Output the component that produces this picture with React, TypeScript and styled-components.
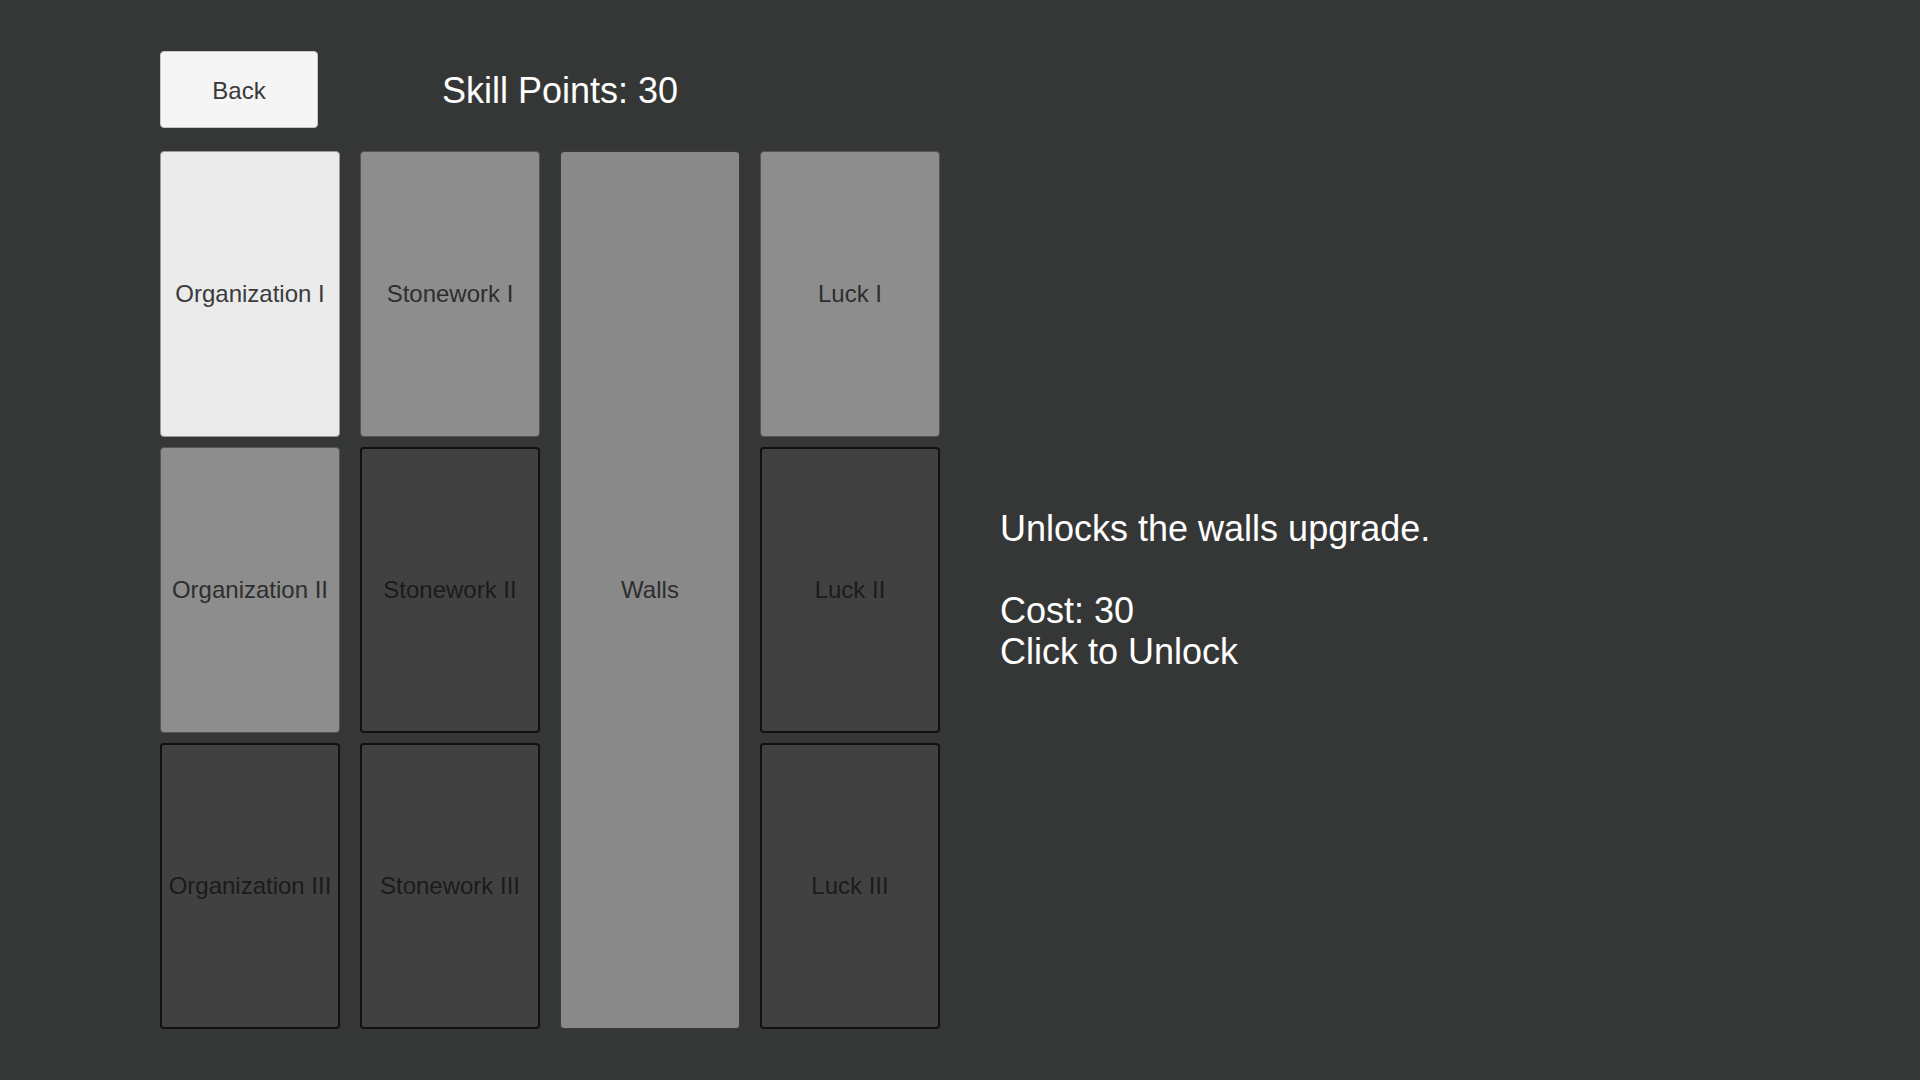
import React from "react";
import styled, { createGlobalStyle } from "styled-components";

type TileState = "owned" | "available" | "locked" | "selected";

interface Skill {
    label: string;
    state: TileState;
    col: number;
    row: number;
    span?: number;
}

const skills: Skill[] = [
    { label: "Organization I", state: "owned", col: 1, row: 1 },
    { label: "Organization II", state: "available", col: 1, row: 2 },
    { label: "Organization III", state: "locked", col: 1, row: 3 },
    { label: "Stonework I", state: "available", col: 2, row: 1 },
    { label: "Stonework II", state: "locked", col: 2, row: 2 },
    { label: "Stonework III", state: "locked", col: 2, row: 3 },
    { label: "Walls", state: "selected", col: 3, row: 1, span: 3 },
    { label: "Luck I", state: "available", col: 4, row: 1 },
    { label: "Luck II", state: "locked", col: 4, row: 2 },
    { label: "Luck III", state: "locked", col: 4, row: 3 },
];

const tileColors: Record<TileState, { bg: string; border: string; text: string }> = {
    owned: { bg: "#ebebeb", border: "#9a9a9a", text: "#3a3a3a" },
    available: { bg: "#8d8d8d", border: "#555555", text: "#2e2e2e" },
    selected: { bg: "#898989", border: "#3a3a3a", text: "#2e2e2e" },
    locked: { bg: "#414141", border: "#111111", text: "#1b1b1b" },
};

const App = () => {
    return (
        <>
            <GlobalStyle />
            <Page>
                <Header>
                    <BackButton>Back</BackButton>
                    <Points>Skill Points: 30</Points>
                </Header>
                <Main>
                    <Tree>
                        {skills.map((s) => (
                            <Tile
                                key={s.label}
                                $state={s.state}
                                $col={s.col}
                                $row={s.row}
                                $span={s.span ?? 1}
                            >
                                {s.label}
                            </Tile>
                        ))}
                    </Tree>
                    <Description>
                        Unlocks the walls upgrade.
                        <br />
                        <br />
                        Cost: 30
                        <br />
                        Click to Unlock
                    </Description>
                </Main>
            </Page>
        </>
    );
};

export default App;

const GlobalStyle = createGlobalStyle`
    html, body {
        margin: 0;
        padding: 0;
        background: #353736;
        font-family: "Liberation Sans", Arial, sans-serif;
    }
`;

const Page = styled.div`
    width: 1920px;
    height: 1080px;
    box-sizing: border-box;
    padding: 51px 0 0 160px;
    background: #353736;
    overflow: hidden;
`;

const Header = styled.div`
    display: flex;
    align-items: center;
    height: 77px;
`;

const BackButton = styled.button`
    width: 158px;
    height: 77px;
    background: #f5f5f5;
    border: 1px solid #c8c8c8;
    border-radius: 4px;
    color: #383838;
    font-family: "Liberation Sans", Arial, sans-serif;
    font-size: 24px;
    padding: 2px 0 0;
    cursor: pointer;
`;

const Points = styled.div`
    margin-left: 124px;
    margin-top: 3px;
    color: #ffffff;
    font-size: 36px;
`;

const Main = styled.div`
    display: flex;
    align-items: center;
    margin-top: 23px;
`;

const Tree = styled.div`
    display: grid;
    grid-template-columns: repeat(4, 180px);
    grid-template-rows: repeat(3, 286px);
    column-gap: 20px;
    row-gap: 10px;
`;

const Tile = styled.div<{ $state: TileState; $col: number; $row: number; $span: number }>`
    grid-column: ${(p) => p.$col};
    grid-row: ${(p) => p.$row} / span ${(p) => p.$span};
    display: flex;
    align-items: center;
    justify-content: center;
    box-sizing: border-box;
    background: ${(p) => tileColors[p.$state].bg};
    border: ${(p) => (p.$state === "locked" ? "2px" : "1px")} solid
        ${(p) => tileColors[p.$state].border};
    border-radius: 4px;
    color: ${(p) => tileColors[p.$state].text};
    font-size: 24px;
    white-space: nowrap;
    cursor: pointer;
`;

const Description = styled.div`
    margin-left: 60px;
    color: #ffffff;
    font-size: 36px;
    line-height: 41px;
`;
